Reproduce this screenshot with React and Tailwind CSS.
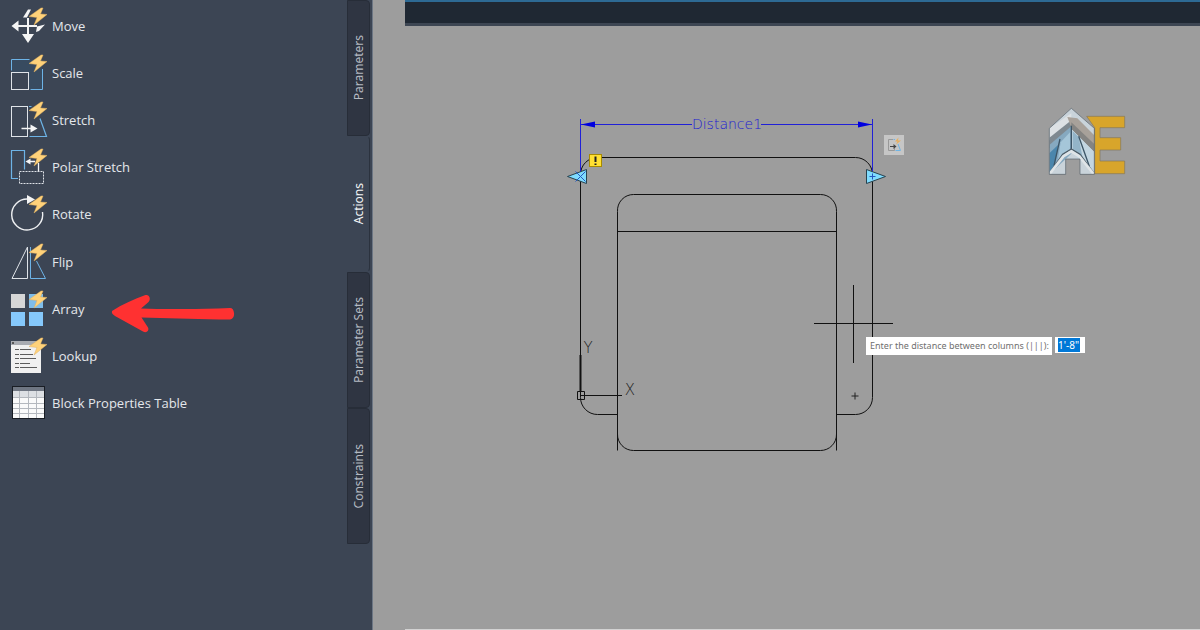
// Block authoring palette next to the block editor canvas
import React, { useState } from 'react';

const Bolt = () => (
  <path d="M30 0L18 8.5L26 9.5L23 17L36 6.5L29.5 6L32 0Z" fill="#ffd27a" stroke="#e0b060" strokeWidth="0.5" />
);

const MoveIcon = () => (
  <>
    <path d="M17 10V28M5 18H26" stroke="#f5f5f5" strokeWidth="2" />
    <path d="M0.5 18L7.5 12.5V23.5ZM17 35L11 26H23ZM12 9.5L17 1.5H20L16 9.5ZM25 24L26 18.5L34 16.5L28 23Z" fill="#f5f5f5" />
    <Bolt />
  </>
);

const ScaleIcon = () => (
  <>
    <path d="M1 16V5H31V34H18V17H1Z" fill="#34516b" fillOpacity="0.5" />
    <path d="M0.5 15.5V4.5H18.5M31.5 14V34.5H19.5" stroke="#6db3e6" />
    <rect x="0.5" y="17.5" width="17" height="17" stroke="#dfe3e8" />
    <Bolt />
  </>
);

const StretchIcon = () => (
  <>
    <rect x="0.5" y="4.5" width="16" height="30" stroke="#dfe3e8" />
    <path d="M18 4.5H20.5M29 16.5L35.5 34.5H18.5" stroke="#6db3e6" strokeWidth="1.2" />
    <path d="M10.5 26.5H20" stroke="#f5f5f5" strokeWidth="1.5" />
    <path d="M19.5 22.5L26.5 26.5L19.5 30.5Z" fill="#f5f5f5" />
    <Bolt />
  </>
);

const PolarStretchIcon = () => (
  <>
    <path d="M7 29.5H0.5V1.5H13.5V20.5" stroke="#6db3e6" strokeWidth="1.2" />
    <rect x="8.5" y="22.5" width="24" height="12" stroke="#dfe3e8" strokeDasharray="2 1" />
    <path d="M18 12.5H24M27.5 14V22" stroke="#f5f5f5" strokeWidth="1.3" />
    <path d="M14.5 12.5L19.5 9.5V15.5Z" fill="#f5f5f5" />
    <Bolt />
  </>
);

const RotateIcon = () => (
  <>
    <path d="M16.5 3A15.5 15.5 0 1 0 31.5 16" stroke="#eef0f2" strokeWidth="1.4" />
    <path d="M16 -1L24 3.5L16 8Z" fill="#f5f5f5" />
    <Bolt />
  </>
);

const FlipIcon = () => (
  <>
    <path d="M16.5 3V34.5H1Z" stroke="#dfe3e8" />
    <path d="M25.5 17L34.5 34.5H19.5V3" stroke="#6db3e6" />
    <Bolt />
  </>
);

const ArrayIcon = () => (
  <>
    <rect x="0" y="3" width="14" height="14" fill="#d6d6d6" />
    <rect x="18" y="3" width="14" height="14" fill="#7fbdea" />
    <rect x="0" y="21" width="14" height="14" fill="#85c8fb" />
    <rect x="18" y="21" width="14" height="14" fill="#85c8fb" />
    <Bolt />
  </>
);

const LookupIcon = () => (
  <>
    <rect x="0" y="3" width="30" height="32" fill="#f0f0f0" />
    <rect x="0" y="3" width="30" height="4" fill="#a9acb2" />
    <rect x="1" y="4" width="2" height="2" fill="#555" />
    <path d="M4 11.5H8M9 11.5H20M4 16.5H8M9 16.5H22M4 20.5H8M9 20.5H25M4 25.5H8M9 25.5H19M4 29.5H8M9 29.5H26" stroke="#5c5c5c" />
    <Bolt />
  </>
);

const TableIcon = () => (
  <>
    <rect x="1.5" y="1.5" width="32" height="32" fill="#fafafa" stroke="#191d24" />
    <rect x="2" y="2" width="31" height="4" fill="#6f7682" />
    <rect x="2" y="6" width="31" height="6" fill="#dde0e4" />
    <path d="M2 12.5H33M2 18.5H33M2 23.5H33M2 28.5H33M8.5 6V33M17.5 6V33M25.5 6V33" stroke="#b4b8be" />
  </>
);

const TOOLS = [
  { name: 'Move', Icon: MoveIcon },
  { name: 'Scale', Icon: ScaleIcon },
  { name: 'Stretch', Icon: StretchIcon },
  { name: 'Polar Stretch', Icon: PolarStretchIcon },
  { name: 'Rotate', Icon: RotateIcon },
  { name: 'Flip', Icon: FlipIcon },
  { name: 'Array', Icon: ArrayIcon, marked: true },
  { name: 'Lookup', Icon: LookupIcon },
  { name: 'Block Properties Table', Icon: TableIcon },
];

const TABS = ['Parameters', 'Actions', 'Parameter Sets', 'Constraints'];

const RedArrow = () => (
  <svg className="ml-[26px] mt-[10px] h-10 w-[124px] shrink-0" viewBox="0 0 124 40" fill="#ff3131">
    <path d="M1 17C0.5 19 1.5 20.5 4 22L32 37.5C35.5 39.5 38.5 36.5 37 33.5L30.5 23.5C55 24 80 25 108 25.5L119 25.5C122 25 123.5 22 123 19C122.5 15.5 121.5 14 119 14L107 14.5C80 15 55 15.5 30 14.5L37 8.5C40.5 5.5 38.5 0 34.5 1C23 5 12 10 1 17Z" />
  </svg>
);

const Palette = () => {
  const [active, setActive] = useState('Actions');
  return (
    <aside className="flex w-[373px] shrink-0 justify-between border-r border-[#6c7684] bg-[#3c4554] pr-[2px]">
      {/* Tools */}
      <ul className="grid h-[427px] grid-rows-9 pl-[11px] pt-[2px]">
        {TOOLS.map(({ name, Icon, marked }) => (
          <li key={name} className="flex items-center">
            <button className="flex items-center gap-[5px] font-['Open_Sans',sans-serif] text-[13px] leading-5 text-[#e4e7eb]">
              <svg className="size-9 shrink-0 overflow-visible" viewBox="0 0 36 36" fill="none">
                <Icon />
              </svg>
              {name}
            </button>
            {marked && <RedArrow />}
          </li>
        ))}
      </ul>
      {/* Tabs */}
      <div role="tablist" className="flex w-[23px] flex-col">
        {TABS.map(tab => (
          <button
            key={tab}
            role="tab"
            aria-selected={tab === active}
            onClick={() => setActive(tab)}
            className={`flex h-[136px] w-full items-center justify-center rounded-r-[4px] border text-[12px] leading-5 ${
              tab === active
                ? 'border-y-transparent border-l-transparent border-r-[#2b323e] text-[#f2f4f6]'
                : 'border-[#272d38] bg-[#2f3542] text-[#b4b9c1]'
            }`}
          >
            <span className="rotate-180 [writing-mode:vertical-rl]">{tab}</span>
          </button>
        ))}
      </div>
    </aside>
  );
};

const Drawing = () => (
  <svg className="absolute left-[155px] top-[110px] h-[350px] w-[360px]" viewBox="560 110 360 350" fill="none">
    {/* Seat outline */}
    <g stroke="#111">
      <path d="M617.5 414.5H597.5A17 17 0 0 1 580.5 397.5V174.5A17 17 0 0 1 597.5 157.5H855.5A17 17 0 0 1 872.5 174.5V397.5A17 17 0 0 1 855.5 414.5H836.5" />
      <path d="M617.5 450.5V211.5A16 16 0 0 1 633.5 194.5H820.5A16 16 0 0 1 836.5 211.5V450.5M617.5 231.5H836.5" />
      <path d="M617.5 434A16 16 0 0 0 633.5 450.5H820.5A16 16 0 0 0 836.5 434" />
    </g>
    {/* Distance parameter */}
    <path d="M580.5 119V175M872.5 119V175M581 124.5H692M761 124.5H872" stroke="#2020d8" />
    <path d="M581 124.5L595 121.5V127.5ZM872 124.5L858 121.5V127.5Z" fill="#0000e0" />
    <text x="727" y="129" textAnchor="middle" fill="#1c1cd0" className="font-['DejaVu_Sans',sans-serif] text-[14px] font-extralight">
      Distance1
    </text>
    {/* Grips */}
    <path d="M567.5 176.5L586.5 169.5V183.5ZM885.5 176.5L866.5 169.5V183.5Z" fill="#7fdcff" stroke="#27424f" />
    <path d="M575.5 171.5L585.5 181.5M585.5 171.5L575.5 181.5M869.5 176.5H875.5M872.5 173.5V179.5" stroke="#2457c0" />
    <rect x="589.5" y="154.5" width="12" height="12" fill="#ffe033" stroke="#a88b00" />
    <path d="M595.5 156.5V162M595.5 163.5V165" stroke="#222" strokeWidth="2" />
    {/* UCS icon */}
    <path d="M580.5 355V395.5H622M577.5 391.5H584.5V399.5H577.5Z" stroke="#111" />
    <path d="M580.5 355V391" stroke="#111" strokeWidth="2" />
    <g fill="#222" textAnchor="middle" className="font-['DejaVu_Sans',sans-serif] text-[15px] font-extralight">
      <text x="588" y="353">Y</text>
      <text x="630" y="395">X</text>
    </g>
    <path d="M851.5 396H858.5M855 392.5V399.5" stroke="#222" />
    {/* Crosshair */}
    <path d="M814 323.5H893M853.5 285V363" stroke="#111" />
  </svg>
);

const Logo = () => (
  <svg className="absolute right-[73px] top-[106px] h-[70px] w-20" viewBox="51 33 240 210">
    <defs>
      <clipPath id="tower">
        <path d="M58 100L124 40L193 100V238H150V192H107V238H58Z" />
      </clipPath>
    </defs>
    <path d="M170 64H284V98H210V128H272V165H210V198H284V236H194V98Z" fill="#d8a52b" stroke="#84775a" strokeWidth="2" />
    <g clipPath="url(#tower)">
      <rect x="50" y="30" width="150" height="215" fill="#c9d3da" />
      <path d="M50 105L124 55V80L50 142Z" fill="#dde1e4" />
      <path d="M58 128L124 76V100L58 160Z" fill="#7f8990" />
      <path d="M112 66L142 70L200 128V176L124 98Z" fill="#a8a19a" />
      <path d="M124 82L200 154V178L124 102Z" fill="#858482" />
      <path d="M58 150L124 94V176L58 238Z" fill="#86a9c0" />
      <path d="M58 175L84 150L74 212L58 232Z" fill="#4b86ac" />
      <path d="M92 142L120 112V168L82 206Z" fill="#a5c6d9" />
      <path d="M126 104L200 178V238L126 174Z" fill="#c3d6e1" />
      <path d="M128 108L146 126L158 190L128 168Z" fill="#93b4c8" />
      <path d="M124 92V172M90 132L72 212M146 124L178 214" fill="none" stroke="#3d5566" strokeWidth="4" />
      <path d="M60 232L98 178L124 162L150 178L190 232" fill="none" stroke="#4e5d68" strokeWidth="4" />
      <path d="M58 238L100 184L124 169L148 184L192 238" fill="none" stroke="#dfe4e7" strokeWidth="8" />
    </g>
    <path d="M58 100L124 40L193 100V238H150V192H107V238H58Z" fill="none" stroke="#56616a" strokeWidth="2" />
  </svg>
);

const App = () => {
  const [distance, setDistance] = useState('1\'-8"');
  return (
    <div className="flex min-h-screen bg-[#9d9d9d] font-['Noto_Sans',sans-serif]">
      <Palette />
      <main className="relative ml-8 flex min-w-0 flex-1 flex-col justify-between overflow-hidden">
        <div className="h-[26px] border-b-[3px] border-t-2 border-b-[#3d4653] border-t-[#2d6a94] bg-[#1f2833]" />
        <Drawing />
        <button aria-label="Stretch action" className="absolute left-[479px] top-[135px] size-5 bg-[#c6c6c6] p-[2px]">
          <svg className="size-4" viewBox="0 0 16 16" fill="none">
            <path d="M7 2.5H2.5V13.5H8.5V11" stroke="#999" />
            <path d="M9 2.5H7.5M12 7L14.5 13.5H9.5" stroke="#6fb4e4" />
            <path d="M4 9.5H9" stroke="#444" />
            <path d="M7.5 7L10.5 9.5L7.5 12Z" fill="#444" />
            <path d="M12.5 0.5L9 4.5H11.5L10 7.5L15 3.5H12Z" fill="#e8ae5c" />
          </svg>
        </button>
        <Logo />
        {/* Dynamic input */}
        <div className="absolute left-[461px] top-[337px] flex items-start gap-[3px] text-[9px] leading-[14px]">
          <label htmlFor="distance" className="h-[18px] w-[186px] whitespace-nowrap bg-white px-1 py-[2px] text-[#707070]">
            Enter the distance between columns (|||):
          </label>
          <div className="h-4 w-[30px] bg-white px-[3px] py-px">
            <input
              id="distance"
              value={distance}
              onChange={e => setDistance(e.target.value)}
              className="block w-[22px] bg-[#0078d7] text-[10px] text-white outline-none"
            />
          </div>
        </div>
        <div className="h-px bg-[#d2d2d2]" />
      </main>
    </div>
  );
};

export default App;
